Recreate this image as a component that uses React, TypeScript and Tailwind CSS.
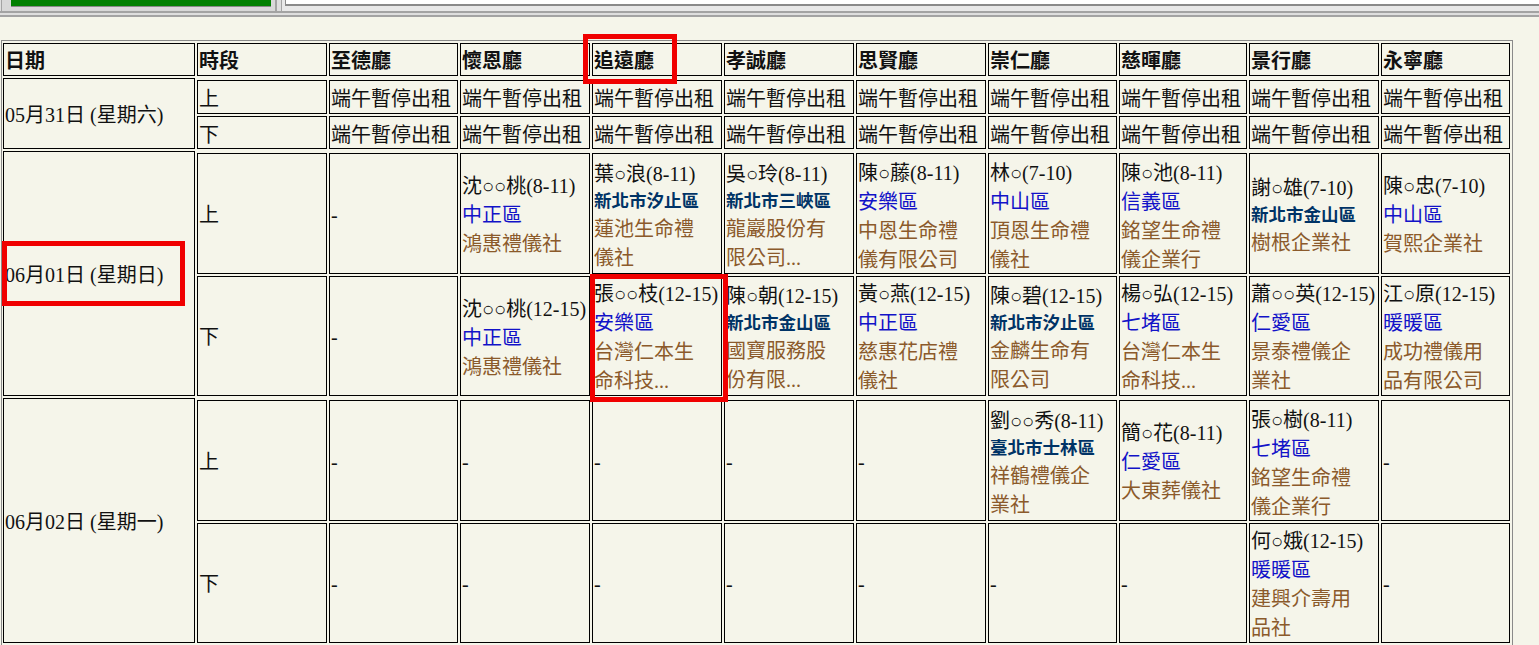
type Booking = { name: string; time: string; region: string; far?: boolean; org: string[] };
type Cell = string | Booking;

const B = (name: string, time: string, region: string, far: boolean, org: string[]): Booking => ({ name, time, region, far, org });
const rent = Array<Cell>(9).fill("端午暫停出租");
const empty = (): Cell => "-";

const days: { date: string; rows: { label: string; h: string; short?: boolean; cells: Cell[] }[] }[] = [
  {
    date: "05月31日 (星期六)",
    rows: [
      { label: "上", h: "h-[34px]", short: true, cells: rent },
      { label: "下", h: "h-[33px]", short: true, cells: rent },
    ],
  },
  {
    date: "06月01日 (星期日)",
    rows: [
      {
        label: "上",
        h: "h-[121px]",
        cells: [
          "-",
          B("沈○○桃", "(8-11)", "中正區", false, ["鴻惠禮儀社"]),
          B("葉○浪", "(8-11)", "新北市汐止區", true, ["蓮池生命禮", "儀社"]),
          B("吳○玲", "(8-11)", "新北市三峽區", true, ["龍巖股份有", "限公司..."]),
          B("陳○藤", "(8-11)", "安樂區", false, ["中恩生命禮", "儀有限公司"]),
          B("林○", "(7-10)", "中山區", false, ["頂恩生命禮", "儀社"]),
          B("陳○池", "(8-11)", "信義區", false, ["銘望生命禮", "儀企業行"]),
          B("謝○雄", "(7-10)", "新北市金山區", true, ["樹根企業社"]),
          B("陳○忠", "(7-10)", "中山區", false, ["賀熙企業社"]),
        ],
      },
      {
        label: "下",
        h: "h-[120px]",
        cells: [
          "-",
          B("沈○○桃", "(12-15)", "中正區", false, ["鴻惠禮儀社"]),
          B("張○○枝", "(12-15)", "安樂區", false, ["台灣仁本生", "命科技..."]),
          B("陳○朝", "(12-15)", "新北市金山區", true, ["國寶服務股", "份有限..."]),
          B("黃○燕", "(12-15)", "中正區", false, ["慈惠花店禮", "儀社"]),
          B("陳○碧", "(12-15)", "新北市汐止區", true, ["金麟生命有", "限公司"]),
          B("楊○弘", "(12-15)", "七堵區", false, ["台灣仁本生", "命科技..."]),
          B("蕭○○英", "(12-15)", "仁愛區", false, ["景泰禮儀企", "業社"]),
          B("江○原", "(12-15)", "暖暖區", false, ["成功禮儀用", "品有限公司"]),
        ],
      },
    ],
  },
  {
    date: "06月02日 (星期一)",
    rows: [
      {
        label: "上",
        h: "h-[121px]",
        cells: [
          empty(), empty(), empty(), empty(), empty(),
          B("劉○○秀", "(8-11)", "臺北市士林區", true, ["祥鶴禮儀企", "業社"]),
          B("簡○花", "(8-11)", "仁愛區", false, ["大東葬儀社"]),
          B("張○樹", "(8-11)", "七堵區", false, ["銘望生命禮", "儀企業行"]),
          empty(),
        ],
      },
      {
        label: "下",
        h: "h-[120px]",
        cells: [
          empty(), empty(), empty(), empty(), empty(), empty(), empty(),
          B("何○娥", "(12-15)", "暖暖區", false, ["建興介壽用", "品社"]),
          empty(),
        ],
      },
    ],
  },
];

const halls = ["至德廳", "懷恩廳", "追遠廳", "孝誠廳", "思賢廳", "崇仁廳", "慈暉廳", "景行廳", "永寧廳"];
const widths = ["w-[192px]", "w-[130px]", "w-[129px]", "w-[130px]", "w-[130px]", "w-[130px]", "w-[130px]", "w-[129px]", "w-[128px]", "w-[130px]", "w-[129px]"];

const td = "border border-black px-px align-middle whitespace-nowrap";
const textPad = "pt-[3px] pb-px";
const shortPad = "pt-[5px] pb-px";

function BookingCell({ b, first }: { b: Booking; first: boolean }) {
  return (
    <div className={first && b.org.length === 2 ? "mb-[-6px]" : "mb-[-4px]"}>
      <div className={b.far ? "leading-[28px] text-[#111]" : "leading-[29px] text-[#111]"}>
        {b.name}
        {b.time}
      </div>
      {b.far ? (
        <div className="text-[17.5px] font-bold leading-[27px] text-[#003366]">{b.region}</div>
      ) : (
        <div className="leading-[29px] text-[#1212c8]">{b.region}</div>
      )}
      {b.org.map((l) => (
        <div key={l} className="leading-[29px] text-[#8b5a2b]">
          {l}
        </div>
      ))}
    </div>
  );
}

function TopBar() {
  return (
    <div className="h-[17px] border-b-2 border-[#a3a3a3] bg-[#dedede]">
      <div className="flex h-[13px] border-b-2 border-[#a3a3a3] pl-[1px]">
        <div className="h-full w-[276px] border-l border-r-2 border-[#a3a3a3] bg-[#d8d8d8] pl-[9px] pr-[3px]">
          <div className="h-[6px] w-[260px] bg-[#008000] shadow-[0_1px_0_#888]" />
        </div>
        <div className="ml-[4px] h-full flex-1 border-l border-[#a3a3a3] bg-[#e8e8e8] pl-[3px]">
          <div className="h-[6px] border-b-2 border-l border-[#8a8a8a] bg-white" />
        </div>
      </div>
    </div>
  );
}

export default function App() {
  return (
    <div className="relative h-[645px] w-[1539px] overflow-hidden bg-[#f5f5ea] font-['Liberation_Serif','Noto_Sans_CJK_TC',serif] text-[20px] leading-[24px] text-[#111]">
      <TopBar />
      <div className="ml-px mt-[23px] w-[1512px] border border-[#8a8a8a]">
        <table className="-ml-px w-[1511px] table-fixed border-separate [border-spacing:2px]">
          <colgroup>
            {widths.map((w, i) => (
              <col key={i} className={w} />
            ))}
          </colgroup>
          <tbody>
            <tr className="h-[33px]">
              {["日期", "時段", ...halls].map((h) => (
                <th key={h} className={`${td} ${textPad} text-left font-bold`}>
                  {h}
                </th>
              ))}
            </tr>
            {days.map((d) => [
              <tr key={d.date}>
                <td rowSpan={3} className={`${td} ${textPad}`}>
                  {d.date}
                </td>
              </tr>,
              ...d.rows.map((r, i) => (
                <tr key={d.date + i}>
                  <td className={`${td} ${r.short ? shortPad : textPad} ${r.h}`}>{r.label}</td>
                  {r.cells.map((c, j) =>
                    typeof c === "string" ? (
                      <td key={j} className={`${td} ${r.short ? shortPad : textPad}`}>
                        {c}
                      </td>
                    ) : (
                      <td key={j} className={`${td} py-px`}>
                        <BookingCell b={c} first={i === 0} />
                      </td>
                    ),
                  )}
                </tr>
              )),
            ])}
          </tbody>
        </table>
      </div>
      <div className="absolute left-[583px] top-[34px] h-[50px] w-[94px] border-[5px] border-[#f00000]" />
      <div className="absolute left-[2px] top-[241px] h-[65px] w-[183px] border-[5px] border-[#f00000]" />
      <div className="absolute left-[590px] top-[274px] h-[128px] w-[138px] border-[5px] border-[#f00000]" />
    </div>
  );
}
